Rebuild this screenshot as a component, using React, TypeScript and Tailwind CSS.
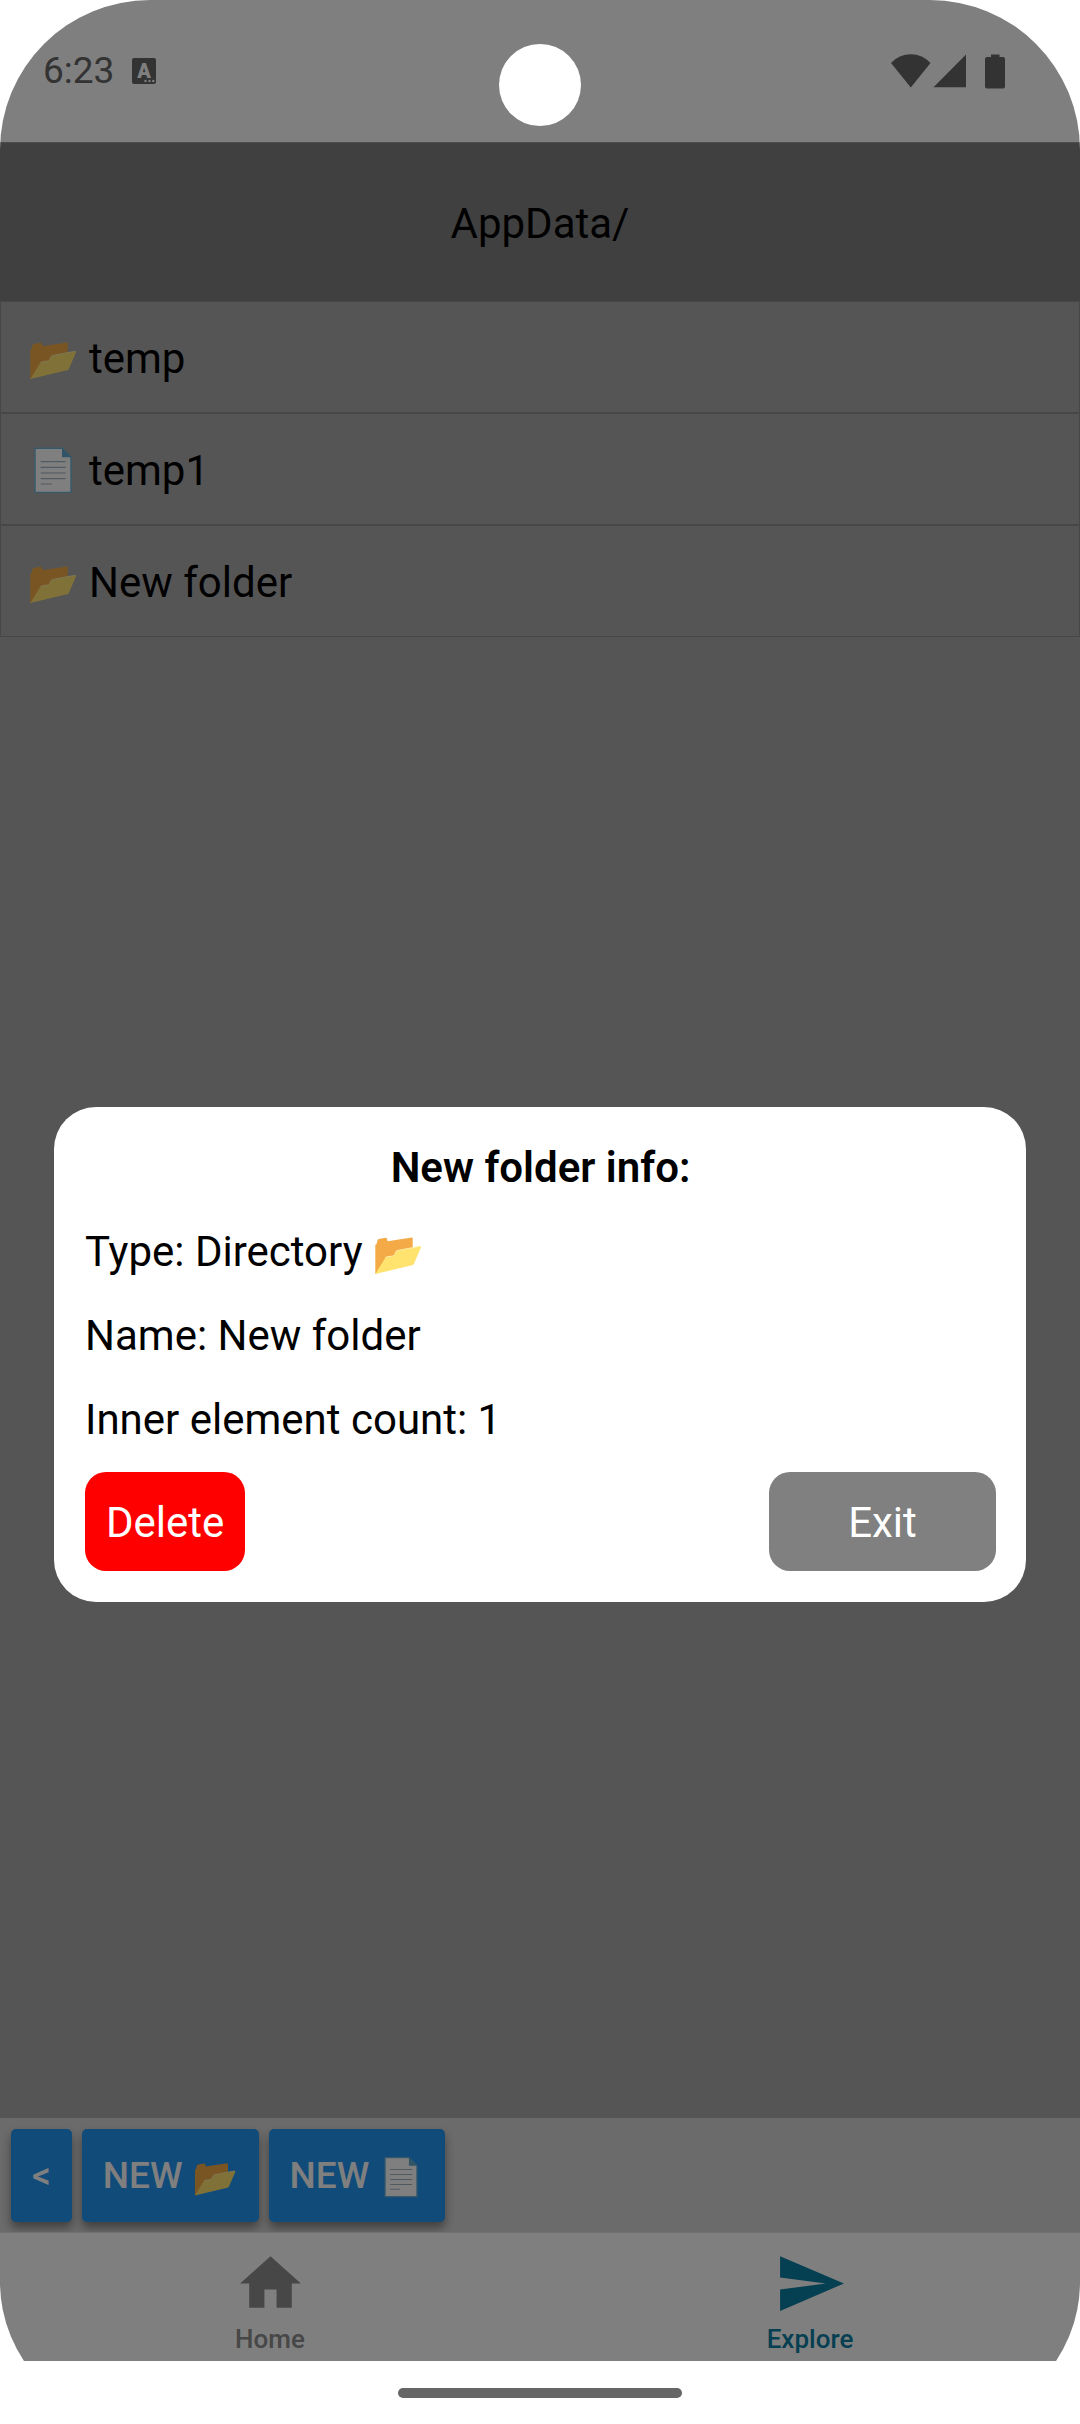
import React from "react";

type IconProps = { className: string };

function FolderIcon({ className }: IconProps) {
  return (
    <svg viewBox="0 0 52 52" className={className} aria-hidden="true">
      <path
        d="M3.3 48V19.5q0-1.2 1.3-1.5l.8-3.6q.3-1.2 1.5-1.4l6.6-1.2q1.2-.2 1.5 1l.6 2.4 24.2-3.7q.9-.1.9.8V30z"
        fill="#f3aa47"
      />
      <path
        d="M3.3 48 13.2 32q.7-1 2-1.2l5.6-.8q1.4-.3 1.9-1.6l1.2-2.6q.5-1.2 1.8-1.4L48 20.3q1.4-.2.9 1.1l-6.8 16q-.6 1.4-2.1 1.8z"
        fill="#ffe36e"
      />
      <path
        d="M13.2 32q.7-1 2-1.2l5.6-.8q1.4-.3 1.9-1.6l1.2-2.6q.5-1.2 1.8-1.4L48 20.3"
        fill="none"
        stroke="#fff0ae"
        strokeWidth="0.9"
      />
    </svg>
  );
}

function DocumentIcon({ className }: IconProps) {
  return (
    <svg viewBox="0 0 52 52" className={className} aria-hidden="true">
      <path d="M8 5.3h27l9 9v35.100H8z" fill="#fff" stroke="#6bb3d6" strokeWidth="1.4" />
      <path d="M35 4.7l9.7 9.6H35z" fill="#62a8cf" />
      <path
        d="M13.7 18.7h25M13.7 24.3h25M13.7 30h25M13.7 35.7h25M13.7 41h11"
        stroke="#a3b4bc"
        strokeWidth="1.2"
        fill="none"
      />
    </svg>
  );
}

function StatusBar() {
  return (
    <div className="flex h-[142px] items-start justify-between bg-white pl-[43px] pr-[75px] pt-[49px] text-[#666]">
      <div className="flex items-center gap-[18px]">
        <span className="text-[37px] leading-[44px]">6:23</span>
        <svg viewBox="0 0 24 26" className="h-[26px] w-6" aria-hidden="true">
          <rect width="24" height="26" rx="2" fill="#666" />
          <text
            x="12"
            y="19.5"
            textAnchor="middle"
            fontFamily="Roboto, sans-serif"
            fontSize="20"
            fontWeight="900"
            fill="#fff"
          >
            A
          </text>
          <circle cx="13.5" cy="23" r="1.2" fill="#fff" />
          <circle cx="17.5" cy="23" r="1.2" fill="#fff" />
          <circle cx="21.3" cy="23" r="1.2" fill="#fff" />
        </svg>
      </div>
      <div className="mt-[5px] flex items-start">
        <svg viewBox="0 0 40 34" className="h-[34px] w-10" aria-hidden="true">
          <path d="M0 9Q8 .3 19.8.3T39.500 9L19.8 33.500z" fill="#666" />
        </svg>
        <svg viewBox="0 0 34 34" className="ml-0.5 h-[34px] w-[34px]" aria-hidden="true">
          <path d="M.5 33.300 33 .5v32.800z" fill="#666" />
        </svg>
        <svg viewBox="0 0 20 35" className="ml-[18px] h-[35px] w-5" aria-hidden="true">
          <path d="M6 .5h8.500V3H18q2 0 2 2v27.500q0 2-2 2H2q-2 0-2-2V5q0-2 2-2h4z" fill="#666" />
        </svg>
      </div>
    </div>
  );
}

const entries = [
  { name: "temp", kind: "folder" },
  { name: "temp1", kind: "file" },
  { name: "New folder", kind: "folder" },
];

function FileList() {
  return (
    <ul className="flex flex-1 flex-col bg-[#aaa]">
      {entries.map((entry) => (
        <li key={entry.name} className="flex h-28 border border-[#8e8e8e]">
          <button type="button" className="flex flex-1 items-center gap-2.5 pl-[26px] text-left text-[42px] leading-[50px] text-black">
            {entry.kind === "folder" ? (
              <FolderIcon className="h-[52px] w-[52px]" />
            ) : (
              <DocumentIcon className="h-[52px] w-[52px]" />
            )}
            <span className="pt-1">{entry.name}</span>
          </button>
        </li>
      ))}
    </ul>
  );
}

function ToolButton({ children, label }: { children: React.ReactNode; label: string }) {
  return (
    <button
      type="button"
      aria-label={label}
      className="flex items-center gap-[9px] rounded-[5px] bg-[#2196f3] px-[21px] py-[23px] text-[37px] font-medium leading-[47px] text-white shadow-[0_6px_10px_rgba(0,0,0,0.4)]"
    >
      {children}
    </button>
  );
}

function Toolbar() {
  return (
    <div className="flex gap-2.5 overflow-hidden bg-[#d6d6d6] px-[11px] pb-2.5 pt-[11px]">
      <ToolButton label="Back">
        <span>&lt;</span>
      </ToolButton>
      <ToolButton label="New folder">
        <span>NEW</span>
        <FolderIcon className="h-[46px] w-[46px]" />
      </ToolButton>
      <ToolButton label="New file">
        <span>NEW</span>
        <DocumentIcon className="h-[46px] w-[46px]" />
      </ToolButton>
    </div>
  );
}

function NavBar() {
  return (
    <nav className="flex border-t border-[#e4e4e4] bg-white pb-1.5 pt-3.5 text-[26px] font-medium leading-8">
      <a href="#home" className="flex flex-1 flex-col items-center gap-[3px] text-[#8e8e8f]">
        <svg viewBox="0 0 24 24" className="h-[73px] w-[73px]" fill="currentColor" aria-hidden="true">
          <path d="M10 20v-6h4v6h5v-8h3L12 3 2 12h3v8z" />
        </svg>
        <span>Home</span>
      </a>
      <a href="#explore" aria-current="page" className="flex flex-1 flex-col items-center gap-[3px] text-[#0a7ea4]">
        <svg viewBox="0 0 24 24" className="h-[73px] w-[73px]" fill="currentColor" aria-hidden="true">
          <path d="M2 21l21-9L2 3v7l15 2-15 2z" />
        </svg>
        <span>Explore</span>
      </a>
    </nav>
  );
}

function InfoDialog() {
  return (
    <div className="absolute inset-0 flex items-center justify-center bg-black/50 pt-[348px]">
      <div
        role="dialog"
        aria-modal="true"
        aria-labelledby="info-title"
        className="w-9/10 rounded-[42px] bg-white pb-[31px] pl-[31px] pr-[30px] pt-[35px] text-[42px] leading-[52px] text-black"
      >
        <div className="flex flex-col gap-8">
          <h2 id="info-title" className="text-center font-semibold">
            New folder info:
          </h2>
          <p className="flex h-[52px] items-center gap-[9px]">
            Type: Directory <FolderIcon className="h-[52px] w-[52px]" />
          </p>
          <p>Name: New folder</p>
          <p>Inner element count: 1</p>
        </div>
        <div className="mt-[26px] flex justify-between text-white">
          <button type="button" className="rounded-[21px] bg-[#ff0000] px-[21px] pb-[22px] pt-[25px]">
            Delete
          </button>
          <button type="button" className="w-[227px] rounded-[21px] bg-[#808080] pb-[22px] pt-[25px]">
            Exit
          </button>
        </div>
      </div>
    </div>
  );
}

export default function App() {
  return (
    <div className="min-h-screen bg-white font-['Roboto',sans-serif]">
      <div className="relative flex min-h-screen flex-col overflow-hidden rounded-b-[142px] rounded-t-[150px] bg-white">
        <div className="relative flex flex-1 flex-col">
          <StatusBar />
          <header className="border-t border-[#9a9a9a] bg-[#808080] pb-[52px] pt-14 text-center text-[42px] leading-[50px] text-black">
            <h1>AppData/</h1>
          </header>
          <FileList />
          <Toolbar />
          <NavBar />
          <InfoDialog />
        </div>
        <div className="flex h-[63px] justify-center pt-[27px]">
          <div className="h-2.5 w-[284px] rounded-full bg-[#666]" />
        </div>
        <div className="absolute left-1/2 top-11 h-[82px] w-[82px] -translate-x-1/2 rounded-full bg-white" />
      </div>
    </div>
  );
}
